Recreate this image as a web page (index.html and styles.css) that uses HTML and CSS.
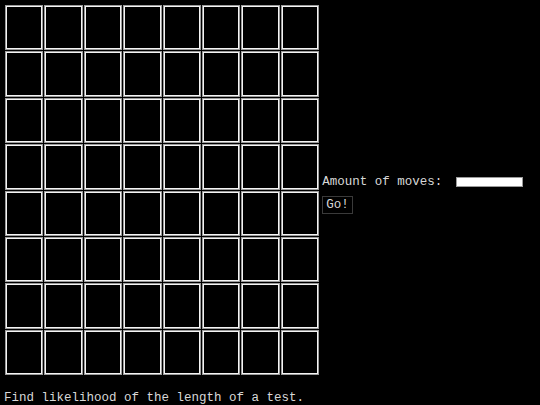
FILE: index.html
```html
<!DOCTYPE html>
<html>
<head>
<meta charset="utf-8">
<link rel="stylesheet" href="styles.css">
</head>
<body>
<div class="main">
  <div class="board" id="board">
    <div class="cell"></div><div class="cell"></div><div class="cell"></div><div class="cell"></div><div class="cell"></div><div class="cell"></div><div class="cell"></div><div class="cell"></div>
    <div class="cell"></div><div class="cell"></div><div class="cell"></div><div class="cell"></div><div class="cell"></div><div class="cell"></div><div class="cell"></div><div class="cell"></div>
    <div class="cell"></div><div class="cell"></div><div class="cell"></div><div class="cell"></div><div class="cell"></div><div class="cell"></div><div class="cell"></div><div class="cell"></div>
    <div class="cell"></div><div class="cell"></div><div class="cell"></div><div class="cell"></div><div class="cell"></div><div class="cell"></div><div class="cell"></div><div class="cell"></div>
    <div class="cell"></div><div class="cell"></div><div class="cell"></div><div class="cell"></div><div class="cell"></div><div class="cell"></div><div class="cell"></div><div class="cell"></div>
    <div class="cell"></div><div class="cell"></div><div class="cell"></div><div class="cell"></div><div class="cell"></div><div class="cell"></div><div class="cell"></div><div class="cell"></div>
    <div class="cell"></div><div class="cell"></div><div class="cell"></div><div class="cell"></div><div class="cell"></div><div class="cell"></div><div class="cell"></div><div class="cell"></div>
    <div class="cell"></div><div class="cell"></div><div class="cell"></div><div class="cell"></div><div class="cell"></div><div class="cell"></div><div class="cell"></div><div class="cell"></div>
  </div>
  <div class="form">
    <div class="row">
      <span class="label">Amount of moves:</span>
      <input class="moves" type="text">
    </div>
    <button class="go">Go!</button>
  </div>
</div>
<p class="footer">Find likelihood of the length of a test.</p>
</body>
</html>
```

FILE: styles.css
```css
html, body {
  margin: 0;
  padding: 0;
  background: #000;
  color: #d8d8d8;
  font-family: "Courier New", "Liberation Mono", monospace;
  font-size: 12.5px;
}
.main {
  display: flex;
  align-items: flex-start;
  padding: 5px 0 0 5px;
}
.board {
  display: grid;
  grid-template-columns: repeat(8, 38.4px);
  grid-template-rows: repeat(8, 45.4px);
  gap: 1px;
}
.cell {
  box-sizing: border-box;
  border: 1px solid #9a9a9a;
  box-shadow: inset 0 0 0 1px #f4f4f4;
  background: #000;
}
.form {
  margin-left: 3px;
  margin-top: 170px;
  display: flex;
  flex-direction: column;
  align-items: flex-start;
  gap: 7px;
}
.row {
  display: flex;
  align-items: center;
  height: 14px;
}
.label {
  white-space: pre;
  line-height: 14px;
}
.moves {
  box-sizing: border-box;
  margin: 0 0 0 14px;
  width: 67px;
  height: 10px;
  padding: 0;
  border: 1px solid #9a9a9a;
  background: #fff;
}
.go {
  box-sizing: border-box;
  height: 18px;
  padding: 0 3px;
  margin: 0;
  background: #000;
  color: #d8d8d8;
  border: 1px solid #3a3a3a;
  font-family: "Courier New", "Liberation Mono", monospace;
  font-size: 12.5px;
  line-height: 14px;
}
.footer {
  margin: 16px 0 0 4px;
  line-height: 14px;
}
```
